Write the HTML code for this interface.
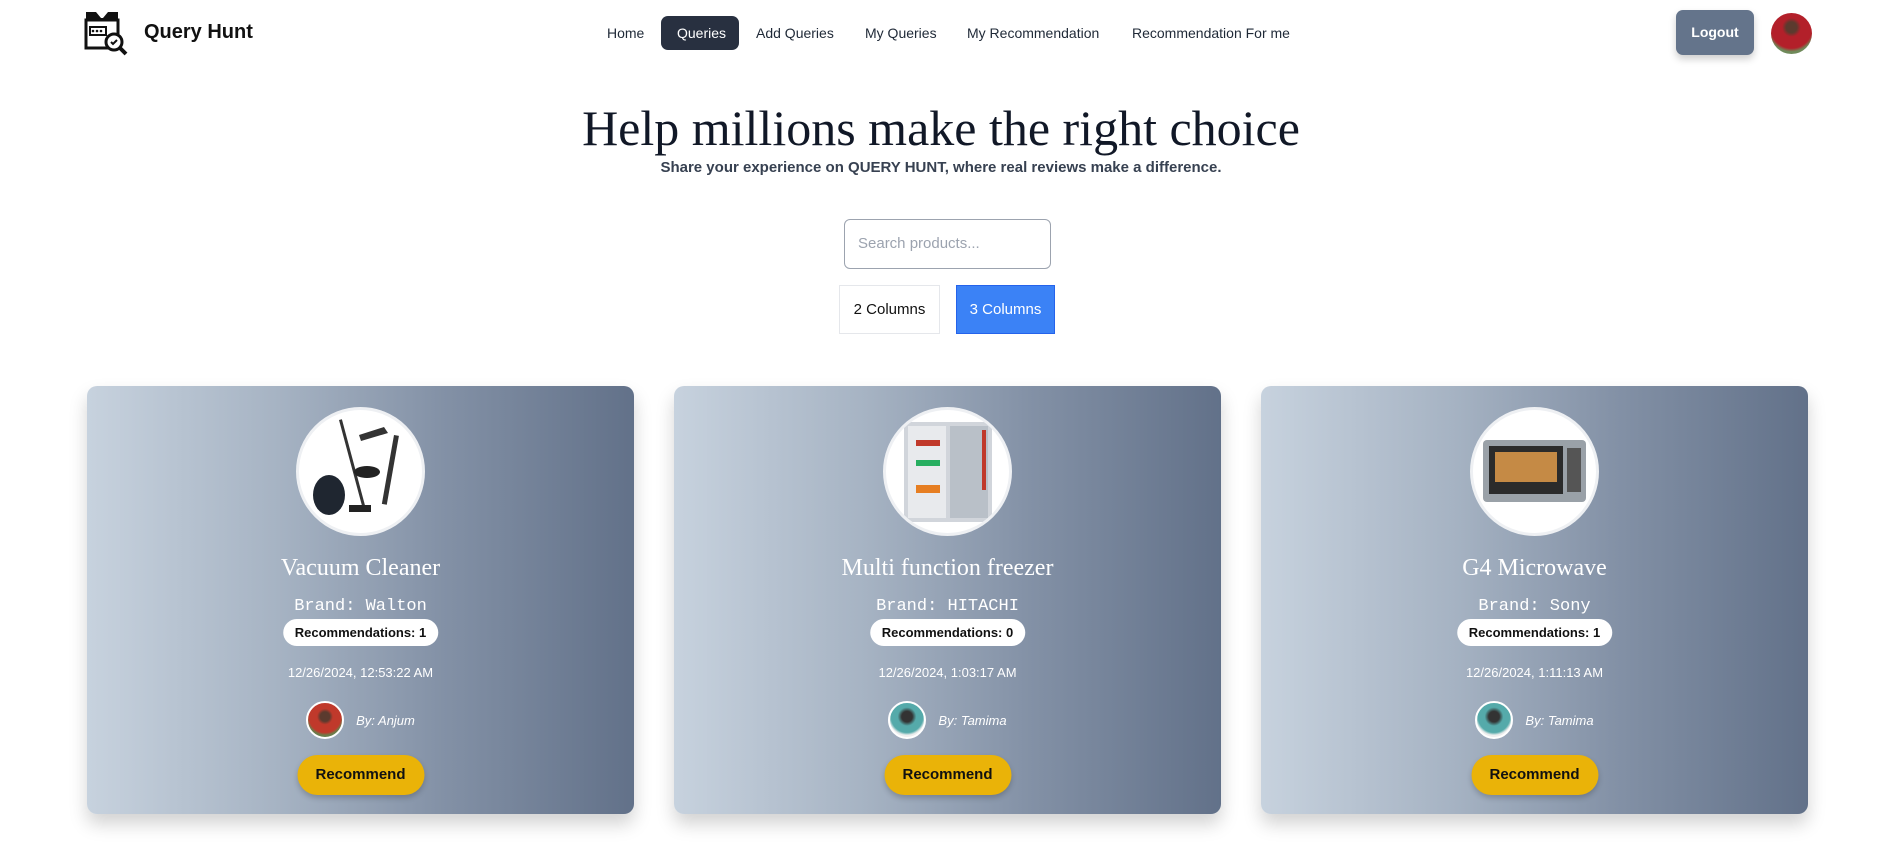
<!DOCTYPE html>
<html><head><meta charset="utf-8">
<style>
*{box-sizing:border-box;margin:0;padding:0}
body{width:1882px;height:855px;background:#fff;font-family:"Liberation Sans",sans-serif;position:relative;overflow:hidden;color:#111827}
.abs{position:absolute}
.nav a{position:absolute;top:16px;height:34px;line-height:34px;font-size:14px;color:#1f2937;text-decoration:none;white-space:nowrap}
.q{background:#283040;color:#fff!important;border-radius:7px;padding:0 16px}
.card{position:absolute;top:386px;width:547px;height:428px;border-radius:10px;background:linear-gradient(90deg,#c7d2de 0%,#a6b3c3 35%,#8391a6 65%,#627189 100%);box-shadow:0 10px 18px rgba(0,0,0,.18);color:#fff;text-align:center}
.img{position:absolute;left:209px;top:21px;width:129px;height:129px;border-radius:50%;background:#fff;border:3px solid #eef0f3;overflow:hidden}
.title{position:absolute;top:169px;left:0;right:0;font-family:"Liberation Serif",serif;font-size:24px}
.brand{position:absolute;top:211px;left:0;right:0;font-family:"Liberation Mono",monospace;font-size:17px}
.badge{position:absolute;top:233px;left:50%;transform:translateX(-50%);background:#fff;color:#111;font-size:13px;font-weight:bold;border-radius:14px;height:27px;line-height:27px;padding:0 12px;white-space:nowrap}
.date{position:absolute;top:279px;left:0;right:0;font-size:13px}
.by{position:absolute;top:315px;left:0;right:0;height:38px;display:flex;justify-content:center;align-items:center;gap:12px;font-style:italic;font-size:13px}
.av{width:38px;height:38px;border-radius:50%;border:2px solid #fff;background:radial-gradient(circle at 50% 40%,#5b3a2e 0 18%,#c0392b 30% 60%,#6a7d4a 70%)}
.rec{position:absolute;top:369px;left:50%;transform:translateX(-50%);width:127px;height:40px;border-radius:20px;background:#eab308;color:#111;font-weight:bold;font-size:15px;line-height:40px;box-shadow:0 3px 6px rgba(0,0,0,.2)}
</style></head><body>
<svg class="abs" style="left:84px;top:10px" width="44" height="46" viewBox="0 0 44 46">
<path d="M2 2h10l5 6h2l5-6h10v8H2z" fill="#111"/>
<rect x="2" y="10" width="32" height="28" fill="none" stroke="#111" stroke-width="3"/>
<rect x="6" y="17" width="16" height="8" fill="none" stroke="#111" stroke-width="2"/>
<circle cx="9" cy="21" r="1.3" fill="#111"/><circle cx="13" cy="21" r="1.3" fill="#111"/><circle cx="17" cy="21" r="1.3" fill="#111"/>
<circle cx="30" cy="32" r="8" fill="#fff" stroke="#111" stroke-width="3"/>
<path d="M27 32l2 2 4-4" stroke="#111" stroke-width="2" fill="none"/>
<path d="M36 38l6 6" stroke="#111" stroke-width="4"/>
</svg>
<div class="abs" style="left:144px;top:21px;font-size:20px;font-weight:bold;color:#111">Query Hunt</div>
<div class="nav">
<a style="left:607px">Home</a>
<a class="q" style="left:661px;width:78px;text-align:center">Queries</a>
<a style="left:756px">Add Queries</a>
<a style="left:865px">My Queries</a>
<a style="left:967px">My Recommendation</a>
<a style="left:1132px">Recommendation For me</a>
</div>
<div class="abs" style="left:1676px;top:10px;width:78px;height:45px;background:#64748b;border-radius:7px;color:#fff;font-weight:bold;font-size:14px;line-height:45px;text-align:center;box-shadow:0 4px 8px rgba(0,0,0,.2)">Logout</div>
<div class="abs" style="left:1771px;top:13px;width:41px;height:41px;border-radius:50%;background:radial-gradient(circle at 50% 35%,#5b3a2e 0 16%,#b3202a 28% 62%,#6f8a5a 72%)"></div>

<div class="abs" style="left:0;right:0;top:99px;text-align:center;font-family:'Liberation Serif',serif;font-size:50px;color:#111827">Help millions make the right choice</div>
<div class="abs" style="left:0;right:0;top:159px;text-align:center;font-size:15px;font-weight:bold;color:#374151">Share your experience on QUERY HUNT, where real reviews make a difference.</div>

<div class="abs" style="left:844px;top:219px;width:207px;height:50px;border:1px solid #9ca3af;border-radius:6px;font-size:15px;color:#9ca3af;padding-left:13px;line-height:48px">Search products...</div>
<div class="abs" style="left:839px;top:285px;width:101px;height:49px;border:1px solid #e5e7eb;font-size:15px;line-height:47px;text-align:center;color:#111">2 Columns</div>
<div class="abs" style="left:956px;top:285px;width:99px;height:49px;background:#3b82f6;border:1px solid #2563eb;font-size:15px;line-height:47px;text-align:center;color:#fff">3 Columns</div>

<div class="card" style="left:87px">
<div class="img"><svg width="123" height="123"><rect x="40" y="10" width="3" height="90" fill="#333" transform="rotate(-15 40 10)"/><ellipse cx="30" cy="85" rx="16" ry="20" fill="#1f2630"/><rect x="50" y="95" width="22" height="7" fill="#222"/><path d="M60 25l25-8 4 6-27 8z" fill="#333"/><ellipse cx="68" cy="62" rx="13" ry="6" fill="#222"/><rect x="95" y="25" width="5" height="70" fill="#333" transform="rotate(10 95 25)"/></svg></div>
<div class="title">Vacuum Cleaner</div>
<div class="brand">Brand: Walton</div>
<div class="badge">Recommendations: 1</div>
<div class="date">12/26/2024, 12:53:22 AM</div>
<div class="by"><div class="av"></div><span>By: Anjum</span></div>
<div class="rec">Recommend</div>
</div>

<div class="card" style="left:674px">
<div class="img"><svg width="123" height="123"><rect x="18" y="12" width="88" height="100" fill="#d1d5db"/><rect x="22" y="16" width="38" height="92" fill="#e8eaed"/><rect x="64" y="16" width="38" height="92" fill="#b9c0c8"/><rect x="30" y="30" width="24" height="6" fill="#c0392b"/><rect x="30" y="50" width="24" height="6" fill="#27ae60"/><rect x="30" y="75" width="24" height="8" fill="#e67e22"/><rect x="96" y="20" width="4" height="60" fill="#c0392b"/></svg></div>
<div class="title">Multi function freezer</div>
<div class="brand">Brand: HITACHI</div>
<div class="badge">Recommendations: 0</div>
<div class="date">12/26/2024, 1:03:17 AM</div>
<div class="by"><div class="av" style="background:radial-gradient(circle at 50% 40%,#333 0 20%,#5aa 35% 60%,#eee 70%)"></div><span>By: Tamima</span></div>
<div class="rec">Recommend</div>
</div>

<div class="card" style="left:1261px">
<div class="img"><svg width="123" height="123"><rect x="10" y="30" width="103" height="62" rx="4" fill="#9aa1a8"/><rect x="16" y="36" width="74" height="48" fill="#2b2b2b"/><rect x="22" y="42" width="62" height="30" fill="#c58a45"/><rect x="94" y="38" width="14" height="44" fill="#555"/></svg></div>
<div class="title">G4 Microwave</div>
<div class="brand">Brand: Sony</div>
<div class="badge">Recommendations: 1</div>
<div class="date">12/26/2024, 1:11:13 AM</div>
<div class="by"><div class="av" style="background:radial-gradient(circle at 50% 40%,#333 0 20%,#5aa 35% 60%,#eee 70%)"></div><span>By: Tamima</span></div>
<div class="rec">Recommend</div>
</div>
</body></html>
